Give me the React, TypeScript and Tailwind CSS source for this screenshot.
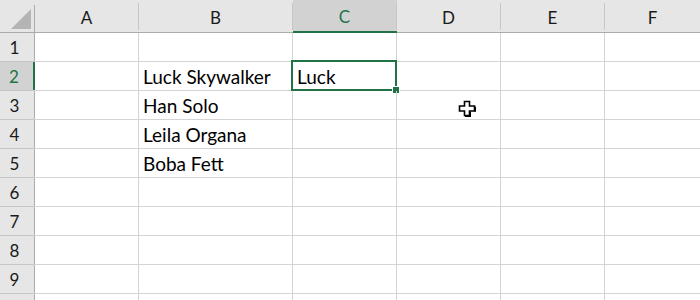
import React from "react";

const cols = [
  { key: "A", w: "w-[104px]" },
  { key: "B", w: "w-[154px]" },
  { key: "C", w: "w-[104px]" },
  { key: "D", w: "w-[104px]" },
  { key: "E", w: "w-[104px]" },
  { key: "F", w: "flex-1" },
];

const data: Record<string, string> = {
  "B2": "Luck Skywalker",
  "C2": "Luck",
  "B3": "Han Solo",
  "B4": "Leila Organa",
  "B5": "Boba Fett",
};

function Cursor() {
  return (
    <svg
      className="absolute left-[458px] top-[100px]"
      width="18"
      height="17"
      viewBox="0 0 18 17"
    >
      <path
        d="M6.5 1.5 H11.5 V6 H16.5 V11 H11.5 V15.5 H6.5 V11 H1.5 V6 H6.5 Z"
        fill="#fff"
        stroke="#000"
        strokeWidth="1.6"
      />
      <path d="M12.3 11.8 V16.3 H7" fill="none" stroke="#000" strokeWidth="1.4" />
      <path d="M17.3 6.8 V11.8" fill="none" stroke="#000" strokeWidth="1.4" />
    </svg>
  );
}

export default function App() {
  const rows = [1, 2, 3, 4, 5, 6, 7, 8, 9, 10];
  return (
    <div
      className="relative w-[700px] h-[300px] overflow-hidden bg-white text-[#000]"
      style={{ fontFamily: "Lato, 'Open Sans', sans-serif" }}
    >
      {/* header row */}
      <div className="flex h-[33px] bg-[#e6e6e6] border-b border-[#ababab]">
        <div className="relative w-[35px] shrink-0 border-r border-[#ababab] mt-[5px]">
          <div className="absolute left-[11px] top-[4px] w-0 h-0 border-l-[20px] border-l-transparent border-b-[20px] border-b-[#b4b4b4]" />
        </div>
        {cols.map((c) => {
          const sel = c.key === "C";
          return (
            <div
              key={c.key}
              className={`${c.w} shrink-0 flex items-start justify-center ${
                sel ? "bg-[#d2d2d2] border-b-2 border-[#217346] -mb-[1px]" : ""
              }`}
            >
              <div
                className={`w-full flex items-center justify-center text-[17px] ${
                  sel ? "text-[#217346]" : "text-[#1a1a1a]"
                } ${c.key !== "F" ? "border-r border-[#c6c6c6]" : ""} mt-[5px] h-[calc(100%-5px)] -translate-y-[2px]`}
              >
                <span className="translate-y-[1px]">{c.key}</span>
              </div>
            </div>
          );
        })}
      </div>
      {rows.map((r) => (
        <div key={r} className="flex h-[29px] border-b border-[#d4d4d4]">
          <div
            className={`w-[35px] shrink-0 flex items-center justify-center pr-[5px] text-[17px] ${
              r === 2
                ? "bg-[#d2d2d2] border-r-2 border-[#217346] text-[#217346]"
                : "bg-[#e6e6e6] border-r border-[#ababab] text-[#1a1a1a]"
            } relative`}
          >
            {r < 10 && <span className="translate-y-[1px]">{r}</span>}
            <div className="absolute left-0 right-0 -bottom-[1px] h-px bg-[#c6c6c6]" />
          </div>
          {cols.map((c) => {
            const id = `${c.key}${r}`;
            const val = data[id];
            const sel = id === "C2";
            return (
              <div
                key={c.key}
                className={`${c.w} shrink-0 relative flex items-end px-[4px] pb-[2px] text-[19px] leading-[22px] whitespace-nowrap ${
                  c.key !== "F" ? "border-r border-[#d4d4d4]" : ""
                }`}
              >
                {val}
                {sel && (
                  <>
                    <div className="absolute -left-[2px] -top-[2px] -right-[1px] -bottom-[1px] border-2 border-[#217346]" />
                    <div className="absolute -right-[3px] -bottom-[3px] w-[6px] h-[6px] bg-[#217346] outline outline-1 outline-white" />
                  </>
                )}
              </div>
            );
          })}
        </div>
      ))}
      <Cursor />
    </div>
  );
}
